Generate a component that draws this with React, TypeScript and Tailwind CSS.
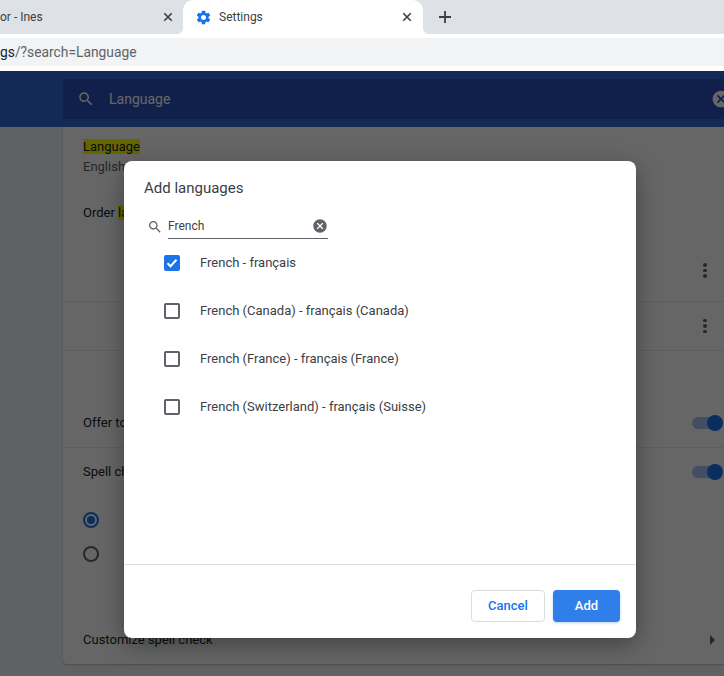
const FONT = "font-['Roboto',sans-serif]";

const SEARCH_PATH =
  "M15.5 14h-.79l-.28-.27C15.41 12.59 16 11.11 16 9.5 16 5.91 13.09 3 9.5 3S3 5.91 3 9.5 5.91 16 9.5 16c1.61 0 3.09-.59 4.23-1.57l.27.28v.79l5 4.99L20.49 19l-4.99-5zm-6 0C7.01 14 5 11.99 5 9.5S7.01 5 9.5 5 14 7.01 14 9.5 11.99 14 9.5 14z";
const CLEAR_PATH =
  "M12 2C6.47 2 2 6.47 2 12s4.47 10 10 10 10-4.47 10-10S17.53 2 12 2zm5 13.59L15.59 17 12 13.41 8.41 17 7 15.59 10.59 12 7 8.41 8.41 7 12 10.59 15.59 7 17 8.41 13.41 12 17 15.59z";
const GEAR_PATH =
  "M19.14 12.94c.04-.3.06-.61.06-.94 0-.32-.02-.64-.07-.94l2.03-1.58c.18-.14.23-.41.12-.61l-1.92-3.32c-.12-.22-.37-.29-.59-.22l-2.39.96c-.5-.38-1.03-.7-1.62-.94l-.36-2.54c-.04-.24-.24-.41-.48-.41h-3.84c-.24 0-.43.17-.47.41l-.36 2.54c-.59.24-1.13.57-1.62.94l-2.39-.96c-.22-.08-.47 0-.59.22L2.74 8.87c-.12.21-.08.47.12.61l2.03 1.58c-.05.3-.09.63-.09.94s.02.64.07.94l-2.03 1.58c-.18.14-.23.41-.12.61l1.92 3.32c.12.22.37.29.59.22l2.39-.96c.5.38 1.03.7 1.62.94l.36 2.54c.05.24.24.41.48.41h3.84c.24 0 .44-.17.47-.41l.36-2.54c.59-.24 1.13-.56 1.62-.94l2.39.96c.22.08.47 0 .59-.22l1.92-3.32c.12-.22.07-.47-.12-.61l-2.01-1.58zM12 15.6c-1.98 0-3.6-1.62-3.6-3.6s1.62-3.6 3.6-3.6 3.6 1.62 3.6 3.6-1.62 3.6-3.6 3.6z";

function CloseIcon({ className }: { className?: string }) {
  return (
    <svg viewBox="0 0 12 12" className={className}>
      <path d="M1.5 1.5l9 9M10.5 1.5l-9 9" stroke="currentColor" strokeWidth="2" fill="none" />
    </svg>
  );
}

function Dots() {
  return (
    <div className="flex flex-col gap-[2px] items-center w-[4px]">
      <span className="w-[3.5px] h-[3.5px] rounded-full bg-[#5f6368]" />
      <span className="w-[3.5px] h-[3.5px] rounded-full bg-[#5f6368]" />
      <span className="w-[3.5px] h-[3.5px] rounded-full bg-[#5f6368]" />
    </div>
  );
}

function Toggle() {
  return (
    <div className="relative w-[30px] h-[12px] rounded-full bg-[#a6c6f5]">
      <span className="absolute right-[-1px] top-[-2px] w-[16px] h-[16px] rounded-full bg-[#1a73e8]" />
    </div>
  );
}

function Browser() {
  return (
    <div className="text-[#3c4043]">
      {/* Tab strip */}
      <div className="h-[34px] bg-[#dee1e6] flex">
        <div className="w-[183px] flex items-center justify-between pr-[10px] text-[12px] leading-none">
          <span>or - Ines</span>
          <CloseIcon className="w-[10px] h-[10px]" />
        </div>
        <div className="relative w-[240px] h-[38px] bg-white rounded-t-[10px] flex items-center pl-[13px] pr-[11px] text-[12px] z-10 pb-[4px]">
          <svg viewBox="0 0 24 24" className="w-[17px] h-[17px] text-[#1a73e8] mr-[7px] ml-[-1px]">
            <path d={GEAR_PATH} fill="currentColor" />
          </svg>
          <span>Settings</span>
          <CloseIcon className="w-[10px] h-[10px] ml-auto" />
          <svg viewBox="0 0 6 6" className="absolute left-[-6px] top-[28px] w-[6px] h-[6px]">
            <path d="M6 0v6H0C3.5 6 6 3.5 6 0z" fill="#fff" />
          </svg>
          <svg viewBox="0 0 6 6" className="absolute right-[-6px] top-[28px] w-[6px] h-[6px]">
            <path d="M0 0v6h6C2.5 6 0 3.5 0 0z" fill="#fff" />
          </svg>
        </div>
        <svg viewBox="0 0 12 12" className="w-[12px] h-[12px] ml-[16px] mt-[11px] text-[#3c4043]">
          <path d="M6 0v12M0 6h12" stroke="currentColor" strokeWidth="1.8" fill="none" />
        </svg>
      </div>
      {/* Address bar */}
      <div className="bg-white pt-[4px] pb-[5px]">
        <div className="h-[28px] bg-[#f1f3f4] flex items-center text-[13.8px] text-[#5f6368] whitespace-nowrap">
          <span className="text-[#202124]">gs</span>/?search=Language
        </div>
      </div>
    </div>
  );
}

function SettingsPage() {
  return (
    <div className="flex-1 bg-[#f1f3f4] text-[13px] text-[#202124]">
      {/* Header */}
      <div className="h-[56px] bg-[#3367d6] pl-[63px] pt-[8px]">
        <div className="h-[40px] bg-[#2a52ba] rounded-l-[2px] flex items-center pl-[14px] relative">
          <svg viewBox="0 0 24 24" className="w-[18px] h-[18px] mr-[14px] text-white">
            <path d={SEARCH_PATH} fill="currentColor" />
          </svg>
          <span className="text-white text-[14px]">Language</span>
          <svg viewBox="0 0 24 24" className="absolute left-[648px] w-[20px] h-[20px] text-white">
            <path d={CLEAR_PATH} fill="currentColor" />
          </svg>
        </div>
      </div>
      {/* Card */}
      <div className="ml-[63px] h-[537px] bg-white rounded-bl-[4px] shadow-[0_1px_2px_rgba(60,64,67,0.3)] flex flex-col">
        <div className="h-[113px] pl-[20px] pt-[10px] leading-[20px]">
          <mark className="bg-[#ffff00] text-[#202124]">Language</mark>
          <div className="text-[#5f6368]">English</div>
          <div className="mt-[26px]">
            Order <mark className="bg-[#ffff00] text-[#202124]">la</mark>
          </div>
        </div>
        <div className="h-[61px] flex items-center justify-end pr-[17px]">
          <Dots />
        </div>
        <div className="h-[49px] border-t border-[#e8eaed] flex items-center justify-end pr-[17px]">
          <Dots />
        </div>
        <div className="h-[97px] border-t border-[#e8eaed] pl-[20px] pt-[62px] flex justify-between items-start pr-[2px]">
          <span className="leading-[20px]">Offer to</span>
          <div className="mt-[4px]">
            <Toggle />
          </div>
        </div>
        <div className="h-[217px] border-t border-[#e8eaed] pl-[20px] pr-[2px] pt-[14px]">
          <div className="flex justify-between">
            <span className="leading-[20px]">Spell ch</span>
            <div className="mt-[4px]">
              <Toggle />
            </div>
          </div>
          <div className="mt-[30px] w-[16px] h-[16px] rounded-full border-2 border-[#1a73e8] flex items-center justify-center">
            <span className="w-[8px] h-[8px] rounded-full bg-[#1a73e8]" />
          </div>
          <div className="mt-[18px] w-[16px] h-[16px] rounded-full border-2 border-[#5f6368]" />
          <div className="mt-[68px] flex justify-between items-center pr-[7px]">
            <span className="leading-[20px]">Customize spell check</span>
            <svg viewBox="0 0 5 10" className="w-[5px] h-[10px] text-[#5f6368]">
              <path d="M0 0l5 5-5 5z" fill="currentColor" />
            </svg>
          </div>
        </div>
      </div>
    </div>
  );
}

const LANGUAGES = [
  { label: "French - français", checked: true },
  { label: "French (Canada) - français (Canada)", checked: false },
  { label: "French (France) - français (France)", checked: false },
  { label: "French (Switzerland) - français (Suisse)", checked: false },
];

function LanguageRow({ label, checked }: { label: string; checked: boolean }) {
  return (
    <div className="h-[48px] flex items-center pl-[40px] text-[13px] text-[#3c4043]">
      {checked ? (
        <div className="w-[16px] h-[16px] rounded-[2px] bg-[#1a73e8] flex items-center justify-center">
          <svg viewBox="0 0 12 12" className="w-[12px] h-[12px]">
            <path d="M1.5 6.2l3 3 6-6.4" stroke="#fff" strokeWidth="2" fill="none" />
          </svg>
        </div>
      ) : (
        <div className="w-[16px] h-[16px] rounded-[2px] border-2 border-[#5f6368]" />
      )}
      <span className="ml-[20px]">{label}</span>
    </div>
  );
}

function AddLanguagesDialog() {
  return (
    <div className="absolute left-[124px] top-[161px] w-[512px] h-[477px] bg-white rounded-[8px] shadow-[0_7px_24px_rgba(0,0,0,0.35)] flex flex-col">
      <div className="pl-[20px] pt-[18px] text-[15px] leading-[18px] text-[#3c4043]">Add languages</div>
      <div className="ml-[24px] mt-[20px] flex items-start">
        <svg viewBox="0 0 24 24" className="w-[16px] h-[16px] mt-[2px] ml-[-1px] text-[#5f6368] mr-[5px]">
          <path d={SEARCH_PATH} fill="currentColor" />
        </svg>
        <div className="w-[160px] h-[22px] border-b border-[#5f6368] flex items-start justify-between text-[12px] leading-[18px] text-[#3c4043]">
          <span>French</span>
          <svg viewBox="0 0 24 24" className="w-[16px] h-[16px] mt-[1px] text-[#5f6368]">
            <path d={CLEAR_PATH} fill="currentColor" />
          </svg>
        </div>
      </div>
      <div>
        {LANGUAGES.map((l) => (
          <LanguageRow key={l.label} label={l.label} checked={l.checked} />
        ))}
      </div>
      <div className="mt-auto h-[74px] border-t border-[#dadce0] flex justify-end items-start gap-[8px] pt-[25px] pr-[16px]">
        <button className="w-[74px] h-[32px] rounded-[4px] border border-[#dadce0] bg-white text-[#1a73e8] text-[13px] font-medium">
          Cancel
        </button>
        <button className="w-[67px] h-[32px] rounded-[4px] bg-[#2f7eea] text-white text-[13px] font-medium shadow-[0_1px_3px_rgba(26,115,232,0.3)]">
          Add
        </button>
      </div>
    </div>
  );
}

export default function App() {
  return (
    <div className={`relative h-[676px] w-[724px] overflow-hidden flex flex-col bg-white ${FONT}`}>
      <Browser />
      <div className="relative flex-1 flex flex-col overflow-hidden">
        <SettingsPage />
        <div className="absolute inset-0 bg-black/60" />
      </div>
      <AddLanguagesDialog />
    </div>
  );
}
